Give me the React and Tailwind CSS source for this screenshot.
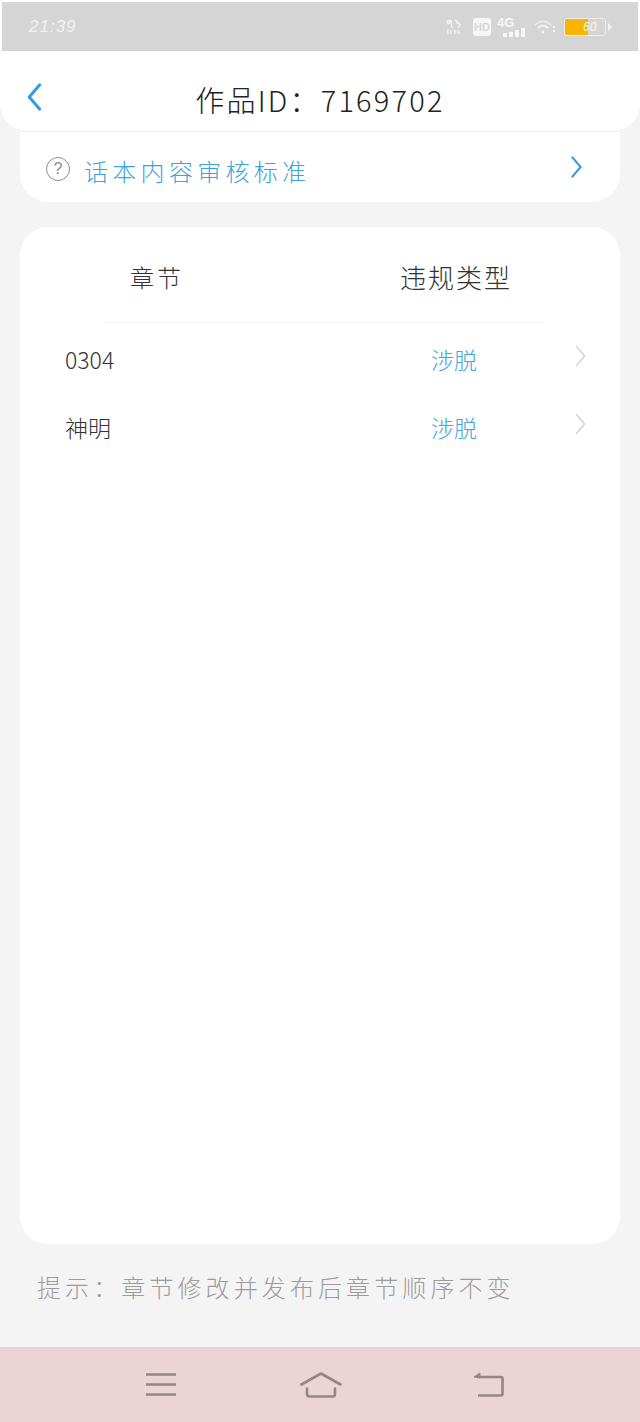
import React from 'react';

const cjk = { fontFamily: '"Noto Sans CJK SC", sans-serif' };

const StatusBar = () => (
  <div className="bg-white px-[2px] pt-[2px]">
    <div className="h-[49px] bg-[#d5d5d5] flex items-center justify-between pl-[27px] pr-[26px]">
      <span className="text-[17px] tracking-[1px] text-[#f2f2f2] font-['Liberation_Sans',sans-serif] italic">21:39</span>
      <div className="flex items-center">
        <svg width="15" height="16" viewBox="0 0 15 16" fill="none" stroke="#f3f3f3" strokeWidth="1.4">
          <path d="M1 3c0-2 3-2 3 0s-3 2-3 0M5 1l1 8M9 2c2-1 3 1 1 3M12 3l2 3-2 3M1 11h1v4M5 11v4M8 11l2 2-2 2M12 11l1 4" />
        </svg>
        <span className="ml-[12px] w-[18px] h-[18px] rounded-[3px] bg-[#f7f7f7] text-[#d5d5d5] text-[11px] font-bold leading-[18px] text-center font-['Liberation_Sans',sans-serif]">HD</span>
        <div className="ml-[6px] w-[28px] h-[20px] relative">
          <span className="absolute left-0 -top-[1px] text-[13px] font-bold text-[#f7f7f7] leading-none font-['Liberation_Sans',sans-serif]">4G</span>
          <div className="absolute right-0 bottom-0 flex items-end gap-[2px]">
            <i className="block w-[4px] h-[4px] bg-[#f7f7f7]" />
            <i className="block w-[4px] h-[5px] bg-[#f7f7f7]" />
            <i className="block w-[4px] h-[7px] bg-[#f7f7f7]" />
            <i className="block w-[4px] h-[9px] bg-[#f7f7f7]" />
          </div>
        </div>
        <svg className="ml-[9px]" width="22" height="16" viewBox="0 0 22 16" fill="none" stroke="#ececec" strokeWidth="1.5">
          <path d="M1 6c5-5 11-5 16 0" />
          <path d="M4 9c3-3 7-3 10 0" strokeWidth="2" stroke="#f5f5f5" />
          <circle cx="9" cy="13" r="1.4" fill="#f5f5f5" stroke="none" />
          <path d="M20 7v2M20 11v2" strokeWidth="2" stroke="#f5f5f5" />
        </svg>
        <div className="ml-[8px] relative w-[42px] h-[18px] rounded-[3px] border border-[#eeeeee] overflow-hidden">
          <div className="h-full w-[23px] bg-[#f8b400]" />
          <span className="absolute left-[18px] top-0 text-[12px] leading-[16px] italic text-[#fdf6e0] font-['Liberation_Sans',sans-serif]">60</span>
        </div>
        <div className="ml-[2px] w-0 h-0 border-y-[4px] border-y-transparent border-l-[4px] border-l-[#f3f3f3]" />
      </div>
    </div>
  </div>
);

const Chevron = ({ className, color, width = 2 }) => (
  <svg className={className} viewBox="0 0 12 24" fill="none" stroke={color} strokeWidth={width} strokeLinecap="round" strokeLinejoin="round">
    <path d="M1.5 1.5 10.5 12 1.5 22.5" />
  </svg>
);

const rows = [
  { name: '0304', type: '涉脱' },
  { name: '神明', type: '涉脱' },
];

export default function App() {
  return (
    <div className="w-[640px] h-[1422px] bg-[#f4f4f4] flex flex-col overflow-hidden" style={cjk}>
      <StatusBar />

      <header className="relative z-10 h-[81px] bg-white rounded-b-[28px] border-b border-[#f0f0f0] flex items-center justify-center">
        <svg className="absolute left-[26px] top-[32px] w-[17px] h-[28px] rotate-180" viewBox="0 0 12 24" fill="none" stroke="#2f9be2" strokeWidth="2.5" strokeLinecap="round" strokeLinejoin="round">
          <path d="M1.5 1.5 10.5 12 1.5 22.5" />
        </svg>
        <h1 className="text-[29px] font-light text-[#222222] tracking-[2.2px] mt-[17px]">作品ID：7169702</h1>
      </header>

      <div className="mx-[20px] h-[70px] bg-white rounded-b-[28px] flex items-center pl-[26px] pr-[38px]">
        <span className="mt-[4px] w-[24px] h-[24px] rounded-full border border-[#8c8c8c] text-[#8c8c8c] text-[16px] leading-[22px] text-center font-['Liberation_Sans',sans-serif]">?</span>
        <span className="ml-[14px] mt-[8px] text-[24px] font-light tracking-[4.3px] text-[#3fa2d8]">话本内容审核标准</span>
        <Chevron className="ml-auto w-[11px] h-[22px]" color="#3a9bd0" width={2.2} />
      </div>

      <main className="mx-[20px] mt-[25px] h-[1017px] bg-white rounded-[28px]">
        <div className="ml-[84px] mr-[75px] h-[96px] border-b border-[#f3f3f3] flex items-center">
          <span className="ml-[26px] w-[270px] mt-[4px] text-[24px] font-light tracking-[3px] text-[#333333]">章节</span>
          <span className="mt-[4px] whitespace-nowrap text-[26px] font-light tracking-[2px] text-[#333333]">违规类型</span>
        </div>
        {rows.map((row) => (
          <div key={row.name} className="h-[68px] first:mt-[4px] flex items-center pl-[45px] pr-[34px]">
            <span className="w-[366px] mt-[4px] text-[23px] font-light text-[#333333]">{row.name}</span>
            <span className="mt-[4px] text-[23px] font-light text-[#43a6d8]">{row.type}</span>
            <Chevron className="ml-auto -mt-[2px] w-[11px] h-[22px]" color="#cfcfcf" width={1.5} />
          </div>
        ))}
      </main>

      <p className="mt-[26px] pl-[37px] text-[24px] font-light tracking-[4.1px] text-[#9c9c9c] leading-[34px]">提示：章节修改并发布后章节顺序不变</p>

      <nav className="mt-auto h-[75px] bg-[#ecd3d6] flex items-center pl-[146px]">
        <svg width="30" height="23" viewBox="0 0 30 23" fill="none" stroke="#958585" strokeWidth="2.6">
          <path d="M0 1.5h30M0 11.5h30M0 21.5h30" />
        </svg>
        <svg className="ml-[124px]" width="42" height="26" viewBox="0 0 42 26" fill="none" stroke="#958585" strokeWidth="2.6" strokeLinecap="round" strokeLinejoin="round">
          <path d="M1.5 12.500 21 1.500l19.500 11" />
          <path d="M7 16.500v5.500q0 2.500 2.500 2.500h23q2.500 0 2.500-2.500v-5.500" />
        </svg>
        <svg className="ml-[131px]" width="31" height="25" viewBox="0 0 31 25" fill="none" stroke="#958585" strokeWidth="2.6" strokeLinejoin="round">
          <path d="M6 5h22q1.500 0 1.500 1.500v15.500q0 1.500-1.500 1.500H5" />
          <path d="M1 5 7 1v5z" fill="#958585" strokeWidth="1" />
        </svg>
      </nav>
    </div>
  );
}
